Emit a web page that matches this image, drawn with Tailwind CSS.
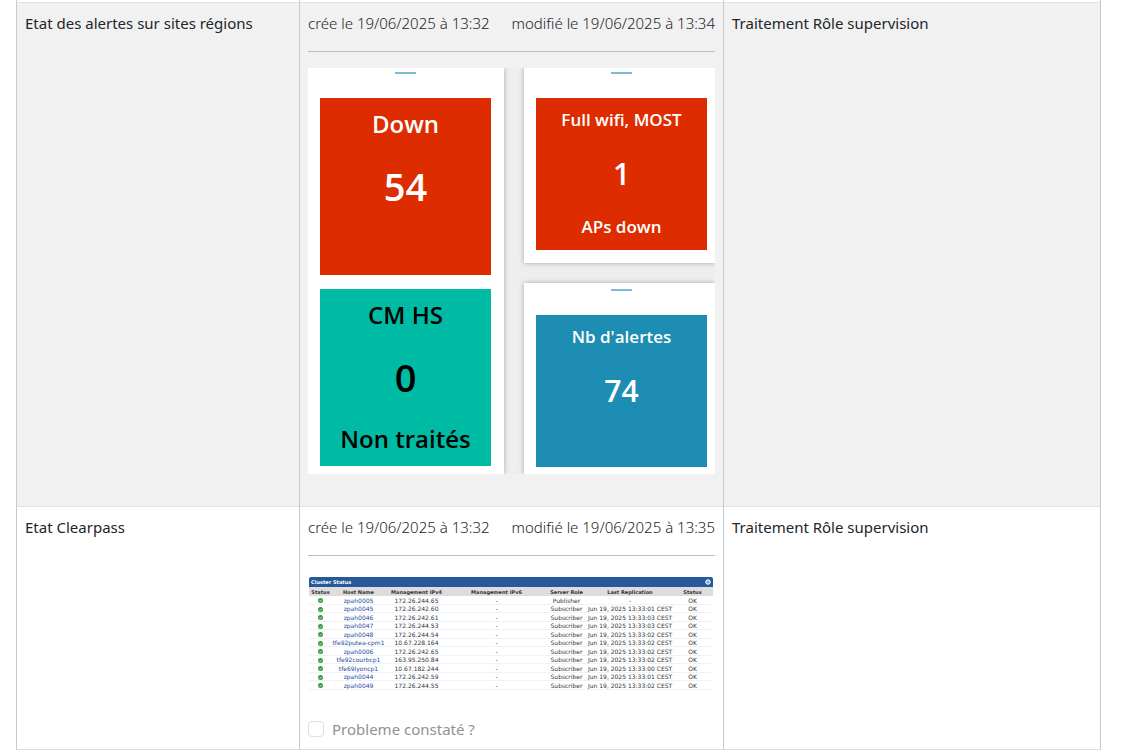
<!DOCTYPE html>
<html lang="fr">
<head>
<meta charset="utf-8">
<title>Supervision</title>
<script src="https://cdn.jsdelivr.net/npm/@tailwindcss/browser@4"></script>
</head>
<body class="bg-white pl-4 pr-[34px] font-['Segoe_UI','Noto_Sans','Open_Sans',sans-serif] text-[15px] leading-6 text-[#212529]">
<svg class="hidden"><symbol id="ok" viewBox="0 0 12 12"><circle cx="6" cy="6" r="6" fill="#2f9a35"/><path d="M3 6.2 5.2 8.4 9 4" fill="none" stroke="#fff" stroke-width="1.8"/></symbol></svg>
<table class="w-full table-fixed border-separate border-spacing-0 border-r border-[#c8c9cb]">
  <colgroup><col class="w-[283px]"><col class="w-[424px]"><col></colgroup>
  <tbody class="align-top">
    <tr>
      <td class="h-[3px] border-b border-l border-b-[#dee2e6] border-l-[#c8c9cb] p-0"></td>
      <td class="border-b border-l border-b-[#dee2e6] border-l-[#c8c9cb] p-0"></td>
      <td class="border-b border-l border-b-[#dee2e6] border-l-[#c8c9cb] p-0"></td>
    </tr>
    <tr class="bg-[#f1f1f1]">
      <td class="border-b border-l border-b-[#dee2e6] border-l-[#c8c9cb] p-2">Etat des alertes sur sites régions</td>
      <td class="border-b border-l border-b-[#dee2e6] border-l-[#c8c9cb] p-2">
        <div class="flex justify-between font-light"><span>crée le 19/06/2025 à 13:32</span><span>modifié le 19/06/2025 à 13:34</span></div>
        <hr class="my-4 border-[#bdbdbe]">
        <div class="mb-6 flex h-[406px] gap-5 overflow-hidden bg-[#eeeeee] text-center font-['Open_Sans',sans-serif] font-semibold text-white">
          <section class="flex w-[196px] flex-col items-center bg-white pl-3 pr-[13px] pt-1 shadow-[0_0_5px_rgba(0,0,0,0.3)]">
            <div class="h-[2px] w-[21px] bg-[#7fb9d3]"></div>
            <div class="mt-6 h-[177px] w-full bg-[#dd2c00] pt-[10px]">
              <p class="text-2xl leading-8">Down</p>
              <p class="mt-4 text-[38px] leading-[60px]">54</p>
            </div>
            <div class="mt-[14px] h-[177px] w-full bg-[#00bba3] pt-[10px] text-black">
              <p class="text-2xl leading-8">CM HS</p>
              <p class="mt-4 text-[38px] leading-[60px]">0</p>
              <p class="mt-4 text-2xl leading-8">Non traités</p>
            </div>
          </section>
          <div class="flex flex-1 flex-col gap-5">
            <section class="flex h-[195px] flex-col items-center bg-white pl-3 pr-2 pt-1 shadow-[0_0_5px_rgba(0,0,0,0.3)]">
              <div class="h-[2px] w-[21px] bg-[#7fb9d3]"></div>
              <div class="mt-6 h-[152px] w-full bg-[#dd2c00] pt-[10px]">
                <p class="text-[17px] leading-6">Full wifi, MOST</p>
                <p class="mt-[22px] text-[30px] leading-10">1</p>
                <p class="mt-[21px] text-[17px] leading-6">APs down</p>
              </div>
            </section>
            <section class="flex flex-1 flex-col items-center bg-white pl-3 pr-2 pt-[6px] shadow-[0_0_5px_rgba(0,0,0,0.3)]">
              <div class="h-[2px] w-[21px] bg-[#7fb9d3]"></div>
              <div class="mt-6 h-[152px] w-full bg-[#1d8db3] pt-[10px]">
                <p class="text-[17px] leading-6">Nb d'alertes</p>
                <p class="mt-[22px] text-[30px] leading-10">74</p>
              </div>
            </section>
          </div>
        </div>
      </td>
      <td class="border-b border-l border-b-[#dee2e6] border-l-[#c8c9cb] p-2">Traitement Rôle supervision</td>
    </tr>
    <tr>
      <td class="border-b border-l border-b-[#dddddd] border-l-[#c8c9cb] p-2">Etat Clearpass</td>
      <td class="border-b border-l border-b-[#dddddd] border-l-[#c8c9cb] p-2">
        <div class="flex justify-between font-light"><span>crée le 19/06/2025 à 13:32</span><span>modifié le 19/06/2025 à 13:35</span></div>
        <hr class="my-4 border-[#bdbdbe]">
        <div class="ml-px mr-[2px] mt-[21px] overflow-hidden rounded-t-[2px] font-['DejaVu_Sans',sans-serif] text-[5px] leading-[8px] text-[#333333]">
          <div class="flex h-[10px] items-center justify-between bg-[#265999] px-[2px] font-bold text-white"><span>Cluster Status</span>
            <svg class="size-[6px]" viewBox="0 0 12 12"><circle cx="6" cy="6" r="4.5" fill="#8fadd0" stroke="#fff" stroke-width="2"/></svg></div>
          <table class="w-full table-fixed border-collapse whitespace-nowrap text-center [&_td]:p-0 [&_th]:p-0 [&_svg]:mx-auto [&_svg]:size-[5px] [&_a]:text-[#2348a0]">
            <colgroup><col class="w-[23px]"><col class="w-[53px]"><col class="w-[63px]"><col class="w-[97px]"><col class="w-[43px]"><col class="w-[84px]"><col class="w-[41px]"></colgroup>
            <thead><tr class="h-[9px] bg-[#dddddd]"><th>Status</th><th>Host Name</th><th>Management IPv4</th><th>Management IPv6</th><th>Server Role</th><th>Last Replication</th><th>Status</th></tr></thead>
            <tbody class="align-middle text-[6px] [&_tr]:h-[8px] [&_tr:nth-child(odd)]:h-[9px] [&_tr]:shadow-[inset_0_-1px_0_#eef3fb]">
              <tr><td><svg><use href="#ok"/></svg></td><td><a href="#">zpah0005</a></td><td>172.26.244.65</td><td>-</td><td>Publisher</td><td>-</td><td>OK</td></tr>
              <tr><td><svg><use href="#ok"/></svg></td><td><a href="#">zpah0045</a></td><td>172.26.242.60</td><td>-</td><td>Subscriber</td><td>Jun 19, 2025 13:33:01 CEST</td><td>OK</td></tr>
              <tr><td><svg><use href="#ok"/></svg></td><td><a href="#">zpah0046</a></td><td>172.26.242.61</td><td>-</td><td>Subscriber</td><td>Jun 19, 2025 13:33:03 CEST</td><td>OK</td></tr>
              <tr><td><svg><use href="#ok"/></svg></td><td><a href="#">zpah0047</a></td><td>172.26.244.53</td><td>-</td><td>Subscriber</td><td>Jun 19, 2025 13:33:03 CEST</td><td>OK</td></tr>
              <tr><td><svg><use href="#ok"/></svg></td><td><a href="#">zpah0048</a></td><td>172.26.244.54</td><td>-</td><td>Subscriber</td><td>Jun 19, 2025 13:33:02 CEST</td><td>OK</td></tr>
              <tr><td><svg><use href="#ok"/></svg></td><td><a href="#">tfe92putea-cpm1</a></td><td>10.67.228.164</td><td>-</td><td>Subscriber</td><td>Jun 19, 2025 13:33:02 CEST</td><td>OK</td></tr>
              <tr><td><svg><use href="#ok"/></svg></td><td><a href="#">zpah0006</a></td><td>172.26.242.65</td><td>-</td><td>Subscriber</td><td>Jun 19, 2025 13:33:02 CEST</td><td>OK</td></tr>
              <tr><td><svg><use href="#ok"/></svg></td><td><a href="#">tfe92courbcp1</a></td><td>163.95.250.84</td><td>-</td><td>Subscriber</td><td>Jun 19, 2025 13:33:02 CEST</td><td>OK</td></tr>
              <tr><td><svg><use href="#ok"/></svg></td><td><a href="#">tfe69lyoncp1</a></td><td>10.67.182.244</td><td>-</td><td>Subscriber</td><td>Jun 19, 2025 13:33:00 CEST</td><td>OK</td></tr>
              <tr><td><svg><use href="#ok"/></svg></td><td><a href="#">zpah0044</a></td><td>172.26.242.59</td><td>-</td><td>Subscriber</td><td>Jun 19, 2025 13:33:01 CEST</td><td>OK</td></tr>
              <tr><td><svg><use href="#ok"/></svg></td><td><a href="#">zpah0049</a></td><td>172.26.244.55</td><td>-</td><td>Subscriber</td><td>Jun 19, 2025 13:33:02 CEST</td><td>OK</td></tr>
            </tbody>
          </table>
        </div>
        <div class="mt-[27px] flex items-center gap-2 text-[#909294]">
          <input id="pb" type="checkbox" disabled class="size-4 appearance-none rounded border border-[#dfdfdf] bg-white">
          <label for="pb">Probleme constaté ?</label>
        </div>
      </td>
      <td class="border-b border-l border-b-[#dddddd] border-l-[#c8c9cb] p-2">Traitement Rôle supervision</td>
    </tr>
  </tbody>
</table>
</body>
</html>
